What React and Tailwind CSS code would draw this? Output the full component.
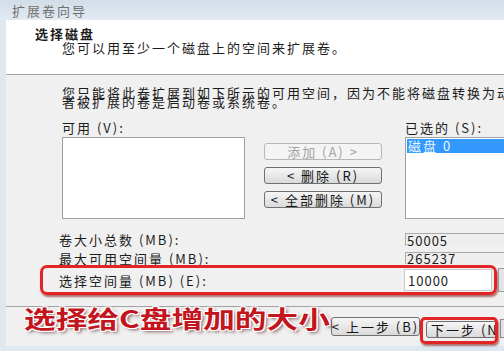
import React from 'react';

// Small classic-looking push button
const Btn = ({ children, disabled, className = '' }) => (
  <div
    className={`flex items-center justify-center rounded-[3px] border leading-none ${
      disabled
        ? 'border-[#b4b8bb] bg-[#f4f4f4] text-[#a3a3a3]'
        : 'border-[#707070] bg-linear-to-b from-[#f6f6f6] to-[#dadada] text-[#151515]'
    } ${className}`}
  >
    {children}
  </div>
);

const ValueBox = ({ value, className = '' }) => (
  <div
    className={`w-[110px] border-t border-l border-[#a9a9a9] bg-[#eeeeee] leading-none tracking-[1px] flex items-center pl-[1px] ${className}`}
  >
    {value}
  </div>
);

export default function App() {
  return (
    <div className="w-[504px] h-[351px] overflow-hidden flex flex-col bg-[#dfe8f1] font-['Noto_Sans_CJK_SC','Noto_Sans',sans-serif] text-[13px] tracking-[2px] text-[#1c1c1c]">
      {/* Title bar */}
      <div className="h-[20px] shrink-0 flex items-center pl-[12px] text-[#707070] bg-linear-to-b from-[#d2dde8] to-[#e2eaf2] leading-none">
        扩展卷向导
      </div>

      <div className="ml-[6px] h-[326px] shrink-0 flex flex-col">
        {/* Header */}
        <header className="h-[55px] shrink-0 bg-white border-b border-[#a7a7a7] pl-[29px] pt-[7px]">
          <div className="font-bold leading-[14px]">选择磁盘</div>
          <div className="pl-[27px] leading-[14px] whitespace-nowrap">
            您可以用至少一个磁盘上的空间来扩展卷。
          </div>
        </header>

        {/* Body */}
        <section className="flex-1 bg-[#f0f0f0] flex flex-col">
          <div className="pl-[56px] pt-[13px] leading-[9px] whitespace-nowrap">
            <div>您只能将此卷扩展到如下所示的可用空间，因为不能将磁盘转换为动态磁盘</div>
            <div>者被扩展的卷是启动卷或系统卷。</div>
          </div>

          {/* Lists and move buttons */}
          <div className="mt-[15px] pl-[56px] flex">
            <div className="w-[183px] shrink-0">
              <div className="h-[14px] leading-[14px] mb-[2px]">可用 (V):</div>
              <div className="h-[82px] bg-white border border-[#a0a0a0]" />
            </div>
            <div className="ml-[19px] w-[118px] shrink-0 pt-[22px] flex flex-col gap-[7px]">
              <Btn disabled className="h-[17px]">添加 (A) &gt;</Btn>
              <Btn className="h-[17px]">&lt; 删除 (R)</Btn>
              <Btn className="h-[17px]">&lt; 全部删除 (M)</Btn>
            </div>
            <div className="ml-[23px] w-[120px] shrink-0">
              <div className="h-[14px] leading-[14px] mb-[2px] whitespace-nowrap">已选的 (S):</div>
              <div className="h-[82px] bg-white border border-[#a0a0a0] pt-[1px] pl-[1px]">
                <div className="h-[14px] bg-[#3399ff] text-[#eaf4ff] leading-[14px] pl-[1px] whitespace-nowrap">
                  磁盘 0
                </div>
              </div>
            </div>
          </div>

          {/* Size fields */}
          <div className="mt-[14px] pl-[53px] flex items-center h-[13px]">
            <div className="w-[346px] shrink-0 leading-none whitespace-nowrap">卷大小总数 (MB):</div>
            <ValueBox value="50005" className="h-[13px]" />
          </div>
          <div className="mt-[6px] pl-[53px] flex items-center h-[12px]">
            <div className="w-[346px] shrink-0 leading-none whitespace-nowrap">最大可用空间量 (MB):</div>
            <ValueBox value="265237" className="h-[12px]" />
          </div>
          <div className="mt-[1px] ml-[34px] flex items-center">
            <div className="w-[457px] h-[30px] shrink-0 rounded-[7px] border-[3px] border-[#e32424] shadow-[1px_2px_2px_rgba(110,0,0,0.55)] flex items-center pl-[16px]">
              <div className="w-[345px] shrink-0 leading-none whitespace-nowrap">选择空间量 (MB) (E):</div>
              <div className="w-[88px] h-[22px] bg-white border border-[#c9c9c9] flex items-center pl-[3px] tracking-[1px] leading-none">
                10000
              </div>
            </div>
            <div className="ml-[1px] w-[10px] h-[24px] shrink-0 border border-[#9a9a9a] bg-[#e4e4e4]" />
          </div>

          {/* Separator */}
          <div className="mt-[11px] border-t border-[#a3a3a3]" />

          {/* Footer */}
          <div className="flex-1 flex items-start pl-[18px]">
            <div className="w-[307px] shrink-0 -mt-[1px] overflow-visible whitespace-nowrap">
              <span className="inline-block origin-left scale-x-[1.32] text-[24px] leading-[24px] font-bold tracking-normal text-[#c3151d] [text-shadow:1px_1px_0_#fff,-1px_-1px_0_#fff,1px_-1px_0_#fff,-1px_1px_0_#fff,2px_2px_3px_rgba(90,40,40,0.7)]">
                选择给C盘增加的大小
              </span>
            </div>
            <Btn className="mt-[10px] w-[89px] h-[19px] shrink-0 whitespace-nowrap">&lt; 上一步 (B)</Btn>
            <div className="mt-[10px] w-[78px] h-[27px] shrink-0 rounded-[5px] border-[3px] border-[#e32424] shadow-[1px_2px_2px_rgba(110,0,0,0.55)] overflow-hidden pl-[3px] pt-[1px]">
              <Btn className="w-[80px] h-[17px] whitespace-nowrap justify-start pl-[4px]">下一步 (N)</Btn>
            </div>
            <div className="mt-[12px] ml-[2px] w-[10px] h-[19px] shrink-0 border border-[#8a8a8a] bg-[#e2e2e2]" />
          </div>
        </section>
      </div>
    </div>
  );
}
